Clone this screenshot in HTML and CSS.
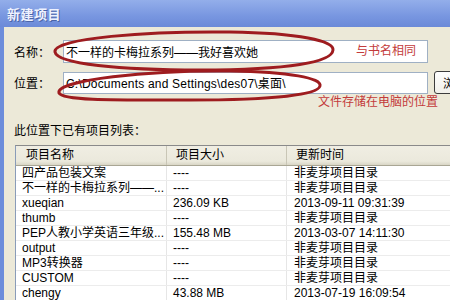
FILE: index.html
```html
<!DOCTYPE html>
<html lang="zh-CN">
<head>
<meta charset="utf-8">
<title>新建项目</title>
<link rel="stylesheet" href="styles.css">
</head>
<body>
<div class="window">
  <div class="titlebar"><span class="title">新建项目</span></div>
  <div class="content">
    <div class="form-row row-name">
      <span class="label">名称：</span>
      <div class="field">不一样的卡梅拉系列——我好喜欢她</div>
    </div>
    <div class="form-row row-loc">
      <span class="label">位置：</span>
      <div class="field">C:\Documents and Settings\des07\桌面\</div>
      <button class="browse">浏览...</button>
    </div>
    <div class="list-label">此位置下已有项目列表：</div>
    <div class="list">
      <div class="lrow head"><span>项目名称</span><span>项目大小</span><span>更新时间</span></div>
      <div class="lrow"><span>四产品包装文案</span><span>----</span><span>非麦芽项目目录</span></div>
      <div class="lrow"><span>不一样的卡梅拉系列——...</span><span>----</span><span>非麦芽项目目录</span></div>
      <div class="lrow"><span>xueqian</span><span>236.09 KB</span><span>2013-09-11 09:31:39</span></div>
      <div class="lrow"><span>thumb</span><span>----</span><span>非麦芽项目目录</span></div>
      <div class="lrow"><span>PEP人教小学英语三年级...</span><span>155.48 MB</span><span>2013-03-07 14:11:30</span></div>
      <div class="lrow"><span>output</span><span>----</span><span>非麦芽项目目录</span></div>
      <div class="lrow"><span>MP3转换器</span><span>----</span><span>非麦芽项目目录</span></div>
      <div class="lrow"><span>CUSTOM</span><span>----</span><span>非麦芽项目目录</span></div>
      <div class="lrow"><span>chengy</span><span>43.88 MB</span><span>2013-07-19 16:09:54</span></div>
    </div>
  </div>
  <svg class="annot" width="450" height="300" viewBox="0 0 450 300">
    <path d="M55 52 C 52 38, 150 31, 230 32 C 300 33, 334 41, 333 50 C 332 62, 290 70, 200 70 C 120 70, 57 64, 55 52 Z" fill="none" stroke="#9e1c1f" stroke-width="3"/>
    <path d="M59 93 C 55 80, 150 70, 230 71 C 290 72, 322 78, 320 86 C 318 95, 270 100, 190 100 C 120 100, 63 101, 59 93 Z" fill="none" stroke="#9e1c1f" stroke-width="3"/>
  </svg>
  <span class="note note-name">与书名相同</span>
  <span class="note note-loc">文件存储在电脑的位置</span>
</div>
</body>
</html>
```

FILE: styles.css
```css
html, body {
  margin: 0;
  padding: 0;
}
body {
  width: 450px;
  height: 300px;
  overflow: hidden;
  background: #ece9d8;
  font-family: "Liberation Sans", "Noto Sans CJK SC", sans-serif;
  font-size: 12px;
  color: #000;
}
.window {
  position: relative;
  width: 450px;
  height: 300px;
  overflow: hidden;
}
.titlebar {
  height: 27px;
  background: linear-gradient(#93aeea, #7896e0 60%, #6b8ad8);
  display: flex;
  align-items: center;
  padding-left: 7px;
}
.title {
  font-family: "Noto Sans CJK SC", sans-serif;
  font-size: 13px;
  font-weight: bold;
  color: #eef2ff;
  text-shadow: 1px 1px 0 #4a64a8;
  letter-spacing: 0.5px;
}
.content {
  border-left: 4px solid #6d8ddb;
  padding: 13px 0 0 10px;
  height: 260px;
  background: #ece9d8;
}
.form-row {
  display: flex;
  align-items: center;
  height: 23px;
}
.row-loc {
  margin-top: 8px;
}
.label {
  width: 49px;
  flex: none;
  font-family: "Noto Sans CJK SC", sans-serif;
}
.field {
  width: 361px;
  height: 21px;
  flex: none;
  border: 1px solid #9fb0c4;
  background: #fff;
  padding-left: 2px;
  box-sizing: content-box;
  display: flex;
  align-items: center;
  white-space: nowrap;
  overflow: hidden;
}
.row-loc .field {
  height: 20px;
  letter-spacing: 0.2px;
}
.browse {
  margin-left: 6px;
  height: 23px;
  width: 70px;
  flex: none;
  border: 1px solid #3c3c3c;
  border-radius: 3px;
  background: linear-gradient(#fefefe, #f1f0ea);
  font: inherit;
  text-align: left;
  padding-left: 8px;
}
.list-label {
  margin-top: 28px;
  height: 16px;
  line-height: 16px;
  font-family: "Noto Sans CJK SC", sans-serif;
}
.list {
  margin-top: 7px;
  margin-left: 1px;
  width: 480px;
  border-top: 1px solid #8a8a8a;
  border-left: 1px solid #8a9cb8;
  background: #fff;
}
.lrow {
  display: grid;
  grid-template-columns: 151px 120px 1fr;
  height: 15px;
  line-height: 15px;
  border-bottom: 1px solid #ececec;
  box-sizing: border-box;
}
.lrow span {
  white-space: nowrap;
  overflow: hidden;
  padding-left: 6px;
  border-right: 1px solid #e6e6e6;
}
.lrow span:first-child {
  padding-left: 6px;
}
.lrow span:nth-child(3) {
  padding-left: 7px;
}
.lrow.head {
  height: 20px;
  line-height: 19px;
  background: linear-gradient(#f0eee3, #ebe9dc 80%, #d9d6c6);
  border-bottom: 1px solid #a9a694;
}
.lrow.head span {
  padding-left: 10px;
  border-right: 1px solid #c9c6b6;
}
.lrow.head span:nth-child(2),
.lrow.head span:nth-child(3) {
  padding-left: 9px;
}
.annot {
  position: absolute;
  left: 0;
  top: 0;
  pointer-events: none;
}
.note {
  position: absolute;
  color: #c33a3a;
  font-family: "Noto Sans CJK SC", sans-serif;
  font-size: 12px;
  line-height: 14px;
  white-space: nowrap;
}
.note-name {
  left: 356px;
  top: 43px;
}
.note-loc {
  left: 318px;
  top: 94px;
}
```
